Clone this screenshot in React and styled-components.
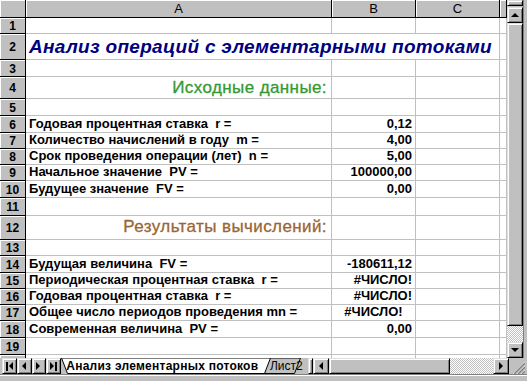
import styled, { createGlobalStyle } from 'styled-components';

const GlobalStyle = createGlobalStyle`
  html, body {
    margin: 0;
    padding: 0;
    background: #c0c0c0;
  }
  body {
    font-family: "Liberation Sans", Arial, sans-serif;
  }
`;

const COLUMNS = ['A', 'B', 'C', ''];

// row 0 is the column header; row 20 only peeks out at the bottom
const ROW_HEIGHTS = [18, 16, 26, 17, 22, 17, 17, 16, 16, 16, 17, 18, 24, 16, 17, 16, 16, 16, 17, 17, 17];

const rows = [
  { n: 1 },
  { n: 2, title: 'Анализ операций с элементарными потоками' },
  { n: 3 },
  { n: 4, heading: 'Исходные данные:', color: '#339933' },
  { n: 5 },
  { n: 6, label: 'Годовая процентная ставка  r =', value: '0,12' },
  { n: 7, label: 'Количество начислений в году  m =', value: '4,00' },
  { n: 8, label: 'Срок проведения операции (лет)  n =', value: '5,00' },
  { n: 9, label: 'Начальное значение  PV =', value: '100000,00' },
  { n: 10, label: 'Будущее значение  FV =', value: '0,00' },
  { n: 11 },
  { n: 12, heading: 'Результаты вычислений:', color: '#996633' },
  { n: 13 },
  { n: 14, label: 'Будущая величина  FV =', value: '-180611,12' },
  { n: 15, label: 'Периодическая процентная ставка  r =', value: '#ЧИСЛО!' },
  { n: 16, label: 'Годовая процентная ставка  r =', value: '#ЧИСЛО!' },
  { n: 17, label: 'Общее число периодов проведения mn =', value: '#ЧИСЛО!', center: true },
  { n: 18, label: 'Современная величина  PV =', value: '0,00' },
  { n: 19 },
  { n: 20 },
];

const Window = styled.div`
  width: 527px;
  height: 381px;
  background: #c0c0c0;
  display: flex;
  flex-direction: column;
  overflow: hidden;
`;

const Main = styled.div`
  display: flex;
  height: 358px;
`;

const Sheet = styled.div`
  width: 507px;
  height: 358px;
  overflow: hidden;
  background: #fff;
  display: grid;
  grid-template-columns: 26px 306px 84px 84px 7px;
  grid-template-rows: ${ROW_HEIGHTS.map((h) => `${h}px`).join(' ')};
  align-content: start;
`;

const HeaderCell = styled.div`
  box-sizing: border-box;
  background: #c0c0c0;
  border-right: 1px solid #000;
  border-bottom: 1px solid #000;
  box-shadow: inset 1px 1px 0 #fff;
  display: flex;
  align-items: center;
  justify-content: center;
  font-size: 13px;
  color: #000;
`;

const RowHeader = styled(HeaderCell)`
  font-size: 12px;
  font-weight: bold;
  padding-top: 1px;
`;

const Cell = styled.div`
  box-sizing: border-box;
  border-right: 1px solid #c0c0c0;
  border-bottom: 1px solid #c0c0c0;
  display: flex;
  align-items: flex-end;
  justify-content: ${(p) => (p.$align === 'right' ? 'flex-end' : p.$align === 'center' ? 'center' : 'flex-start')};
  padding: 0 3px 1px 3px;
  white-space: pre;
  overflow: visible;
  font-size: 13px;
  font-weight: bold;
  line-height: 15px;
  color: #000;
`;

const TitleCell = styled(Cell)`
  grid-column: span 3;
  font-size: 19px;
  letter-spacing: 0.3px;
  font-style: italic;
  line-height: 21px;
  color: #000080;
  padding-bottom: 2px;
`;

const HeadingCell = styled(Cell)`
  justify-content: flex-end;
  font-size: 17px;
  letter-spacing: 0.4px;
  font-weight: normal;
  line-height: 18px;
  color: ${(p) => p.$color};
  padding-right: 4px;
  padding-bottom: ${(p) => p.$pad}px;
  -webkit-text-stroke: 0.3px ${(p) => p.$color};
`;

const Raised = styled.div`
  box-sizing: border-box;
  background: #c0c0c0;
  border: 1px solid;
  border-color: #dfdfdf #000 #000 #dfdfdf;
  box-shadow: inset 1px 1px 0 #fff, inset -1px -1px 0 #808080;
  display: flex;
  align-items: center;
  justify-content: center;
`;

const VScroll = styled.div`
  width: 16px;
  display: flex;
  flex-direction: column;
`;

const SplitBox = styled(Raised)`
  height: 6px;
  margin-bottom: 1px;
`;

const ArrowButton = styled(Raised)`
  width: 16px;
  height: 16px;
  flex: none;
`;

const Thumb = styled(Raised)`
  flex: 1;
`;

const Track = styled.div`
  height: ${(p) => p.$h || 'auto'};
  width: ${(p) => p.$w || 'auto'};
  flex: none;
  background-image: conic-gradient(#fff 25%, #c0c0c0 0 50%, #fff 0 75%, #c0c0c0 0);
  background-size: 2px 2px;
`;

const RightEdge = styled.div`
  width: 4px;
  border-left: 1px solid #808080;
  box-sizing: border-box;
`;

const TabBar = styled.div`
  height: 16px;
  display: flex;
  align-items: stretch;
`;

const NavGroup = styled.div`
  display: flex;
  padding-left: 2px;
  width: 59px;
`;

const NavButton = styled(Raised)`
  width: 15px;
  height: 16px;
`;

const TabStrip = styled.div`
  display: flex;
  width: 247px;
`;

const Tab = styled.div`
  position: relative;
  width: ${(p) => p.$w}px;
  margin-left: ${(p) => p.$overlap || 0}px;
  z-index: ${(p) => (p.$active ? 2 : 1)};
  display: flex;
  align-items: center;
  justify-content: center;
  font-size: 12px;
  letter-spacing: ${(p) => (p.$active ? 0.25 : 0)}px;
  font-weight: ${(p) => (p.$active ? 'bold' : 'normal')};
  padding-left: ${(p) => p.$pl || 0}px;
  color: #000;
`;

const TabShape = styled.svg`
  position: absolute;
  inset: 0;
  z-index: -1;
`;

const TabText = styled.span`
  position: relative;
  line-height: 14px;
  padding-bottom: 1px;
`;

const Splitter = styled(Raised)`
  width: 5px;
`;

const HScroll = styled.div`
  display: flex;
  width: 196px;
`;

const HThumb = styled(Raised)`
  width: 121px;
`;

const Grip = styled.div`
  width: 16px;
  display: flex;
  align-items: flex-end;
  justify-content: flex-end;
`;

const BottomStrip = styled.div`
  flex: 1;
  border-top: 1px solid #808080;
  box-shadow: inset 0 1px 0 #fff;
`;

const Arrow = ({ dir }) => {
  const pts = {
    up: '0,4 4,0 8,4',
    down: '0,0 8,0 4,4',
    left: '4,0 4,8 0,4',
    right: '0,0 0,8 4,4',
  }[dir];
  const vertical = dir === 'up' || dir === 'down';
  return (
    <svg width={vertical ? 8 : 5} height={vertical ? 5 : 9} viewBox={vertical ? '0 0 8 5' : '0 0 5 9'}>
      <polygon points={pts} fill="#000" />
    </svg>
  );
};

const EdgeArrow = ({ dir }) => (
  <svg width="7" height="9" viewBox="0 0 7 9">
    {dir === 'left' ? (
      <>
        <rect x="0" y="0" width="2" height="9" fill="#000" />
        <polygon points="7,0 7,8 3,4" fill="#000" />
      </>
    ) : (
      <>
        <polygon points="0,0 0,8 4,4" fill="#000" />
        <rect x="5" y="0" width="2" height="9" fill="#000" />
      </>
    )}
  </svg>
);

const SheetTab = ({ w, active, overlap, pl, children }) => (
  <Tab $w={w} $active={active} $overlap={overlap} $pl={pl}>
    <TabShape width={w} height="16" viewBox={`0 0 ${w} 16`}>
      <polygon
        points={`0.5,0 6.5,15.5 ${w - 6.5},15.5 ${w - 0.5},0`}
        fill={active ? '#fff' : '#c0c0c0'}
        stroke="#000"
        strokeWidth="1"
      />
    </TabShape>
    <TabText>{children}</TabText>
  </Tab>
);

const SheetRow = ({ row }) => {
  if (row.title) {
    return (
      <>
        <RowHeader>{row.n}</RowHeader>
        <TitleCell>{row.title}</TitleCell>
        <Cell />
      </>
    );
  }
  if (row.heading) {
    return (
      <>
        <RowHeader>{row.n}</RowHeader>
        <HeadingCell $color={row.color} $pad={row.n === 12 ? 3 : 1}>
          {row.heading}
        </HeadingCell>
        <Cell />
        <Cell />
        <Cell />
      </>
    );
  }
  return (
    <>
      <RowHeader>{row.n}</RowHeader>
      <Cell>{row.label}</Cell>
      <Cell $align={row.center ? 'center' : 'right'}>{row.value}</Cell>
      <Cell />
      <Cell />
    </>
  );
};

export default function App() {
  return (
    <>
      <GlobalStyle />
      <Window>
        <Main>
          <Sheet>
            <HeaderCell />
            {COLUMNS.map((c, i) => (
              <HeaderCell key={i}>{c}</HeaderCell>
            ))}
            {rows.map((row) => (
              <SheetRow key={row.n} row={row} />
            ))}
          </Sheet>
          <VScroll>
            <SplitBox />
            <ArrowButton>
              <Arrow dir="up" />
            </ArrowButton>
            <Thumb />
            <Track $h="16px" />
            <ArrowButton>
              <Arrow dir="down" />
            </ArrowButton>
          </VScroll>
          <RightEdge />
        </Main>
        <TabBar>
          <NavGroup>
            <NavButton>
              <EdgeArrow dir="left" />
            </NavButton>
            <NavButton>
              <Arrow dir="left" />
            </NavButton>
            <NavButton>
              <Arrow dir="right" />
            </NavButton>
            <NavButton>
              <EdgeArrow dir="right" />
            </NavButton>
          </NavGroup>
          <TabStrip>
            <SheetTab w={210} active>
              Анализ элементарных потоков
            </SheetTab>
            <SheetTab w={45} overlap={-8} pl={9}>
              Лист2
            </SheetTab>
          </TabStrip>
          <Splitter />
          <HScroll>
            <ArrowButton>
              <Arrow dir="left" />
            </ArrowButton>
            <HThumb />
            <Track $w="43px" />
            <ArrowButton>
              <Arrow dir="right" />
            </ArrowButton>
          </HScroll>
          <Grip>
            <svg width="14" height="14" viewBox="0 0 14 14">
              {[0, 4, 8].map((o) => (
                <g key={o}>
                  <line x1={2 + o} y1="14" x2="14" y2={2 + o} stroke="#fff" strokeWidth="1" />
                  <line x1={3 + o} y1="14" x2="14" y2={3 + o} stroke="#808080" strokeWidth="1.5" />
                </g>
              ))}
            </svg>
          </Grip>
        </TabBar>
        <BottomStrip />
      </Window>
    </>
  );
}
